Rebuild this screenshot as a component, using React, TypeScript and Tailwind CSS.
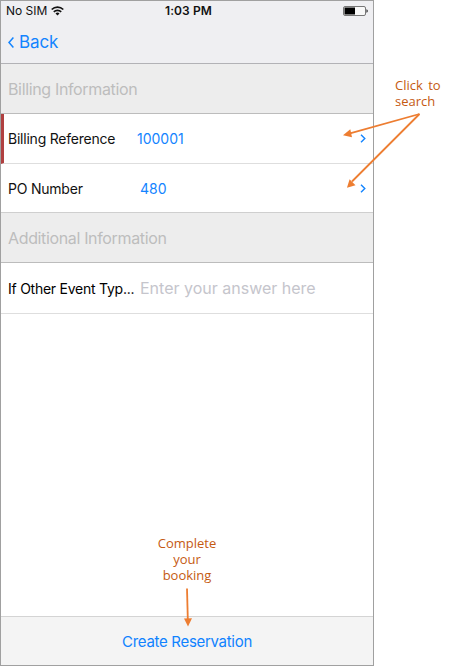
import type { ReactNode } from 'react';

function SectionHeader({ children }: { children: ReactNode }) {
  return (
    <h2 className="flex h-[50px] items-center border-b border-[#bcbcbc] bg-[#ededed] pt-px pl-[7px] text-[16px] tracking-[-0.35px] text-[#bdbdbd]">
      {children}
    </h2>
  );
}

function Chevron() {
  return (
    <svg className="mr-[7px] ml-auto" width="6" height="9" viewBox="0 0 6 9" fill="none">
      <path d="M1 .8 4.8 4.5 1 8.2" stroke="#1384ff" strokeWidth="1.4" />
    </svg>
  );
}

function StatusBar() {
  return (
    <div className="grid h-[19px] grid-cols-3 items-center pr-[5px] pl-[5px] text-[12px] text-[#111]">
      <div className="flex items-center gap-[4px]">
        <span>No SIM</span>
        <svg width="13" height="10" viewBox="0 0 13 10" fill="none" stroke="#111" strokeWidth="1.7">
          <path d="M.7 3.5a8.3 8.3 0 0 1 11.6 0" />
          <path d="M2.8 5.8a5.3 5.3 0 0 1 7.4 0" />
          <path d="M6.5 9.4 4.5 7.4a2.9 2.9 0 0 1 4 0Z" fill="#111" stroke="none" />
        </svg>
      </div>
      <span className="pl-[3px] text-center text-[12px] font-semibold tracking-[0.1px]">1:03 PM</span>
      <svg className="ml-auto" width="25" height="10" viewBox="0 0 25 10">
        <rect x=".5" y=".5" width="22" height="9" rx="1.5" fill="#f8f8f8" stroke="#777" />
        <rect x="1.5" y="1.5" width="10.5" height="7" fill="#000" />
        <path d="M23.5 3.2c1.6.5 1.6 3.1 0 3.6Z" fill="#111" />
      </svg>
    </div>
  );
}

export default function App() {
  return (
    <div className="relative h-[666px] w-[454px] overflow-hidden bg-white font-['Inter',sans-serif]">
      <main className="flex h-[666px] w-[374px] flex-col border border-[#a0a0a0] bg-white">
        <header className="h-[63px] shrink-0 border-b border-[#b2b2b6] bg-[#efeff2]">
          <StatusBar />
          <button className="flex h-[44px] items-center gap-[5px] pl-[7px] text-[17px] tracking-[-0.1px] text-[#1384ff]">
            <svg width="6" height="11" viewBox="0 0 6 11" fill="none">
              <path d="M5.4.6 1 5.5l4.4 4.9" stroke="#1384ff" strokeWidth="1.5" />
            </svg>
            <span className="pt-[2px]">Back</span>
          </button>
        </header>
        <SectionHeader>Billing Information</SectionHeader>
        <div className="flex h-[50px] items-center border-b border-[#dedede] border-l-[3px] border-l-[#b04040] pl-[4px] text-[14px]">
          <span className="w-[129px] tracking-[-0.22px] text-[#111]">Billing Reference</span>
          <span className="text-[#1384ff]">100001</span>
          <Chevron />
        </div>
        <div className="flex h-[49px] items-center border-b border-[#cfcfcf] pl-[7px] text-[14px]">
          <span className="w-[132px] tracking-[-0.22px] text-[#111]">PO Number</span>
          <span className="text-[#1384ff]">480</span>
          <Chevron />
        </div>
        <SectionHeader>Additional Information</SectionHeader>
        <div className="flex h-[51px] items-center border-b border-[#dedede] pl-[7px] text-[14px]">
          <span className="w-[132px] tracking-[-0.25px] whitespace-nowrap text-black">If Other Event Typ...</span>
          <span className="text-[16px] text-[#c5c5cc]">Enter your answer here</span>
        </div>
        <footer className="mt-auto flex h-[49px] items-center justify-center border-t border-[#d4d4d4] bg-[#f4f4f4] pt-[3px] text-[15px] tracking-[-0.3px] text-[#0f82ff]">
          <button>Create Reservation</button>
        </footer>
      </main>
      <p className="absolute top-[77px] left-[395px] font-['Open_Sans',sans-serif] text-[13px] leading-[16px] whitespace-nowrap text-[#c55a11] [word-spacing:2px]">
        Click to
        <br />
        search
      </p>
      <p className="absolute top-[535px] left-[147px] w-[80px] text-center font-['Open_Sans',sans-serif] text-[13px] leading-[16px] text-[#c55a11]">
        Complete
        <br />
        your
        <br />
        booking
      </p>
      <svg className="absolute inset-0" width="454" height="666" fill="#ed7d31" stroke="none">
        <g stroke="#ed7d31" strokeWidth="1.8">
          <path d="M419.5 114 350 133.4" />
          <path d="M419.5 114 352 181.5" />
          <path d="M187 588.5 187.8 619" />
        </g>
        <path d="M343 135.3 350.3 129.3 352 137.3Z" />
        <path d="M347 187.8 349.6 179.2 355.5 185.2Z" />
        <path d="M188 626.5 184 618.4 192 618.2Z" />
      </svg>
    </div>
  );
}
